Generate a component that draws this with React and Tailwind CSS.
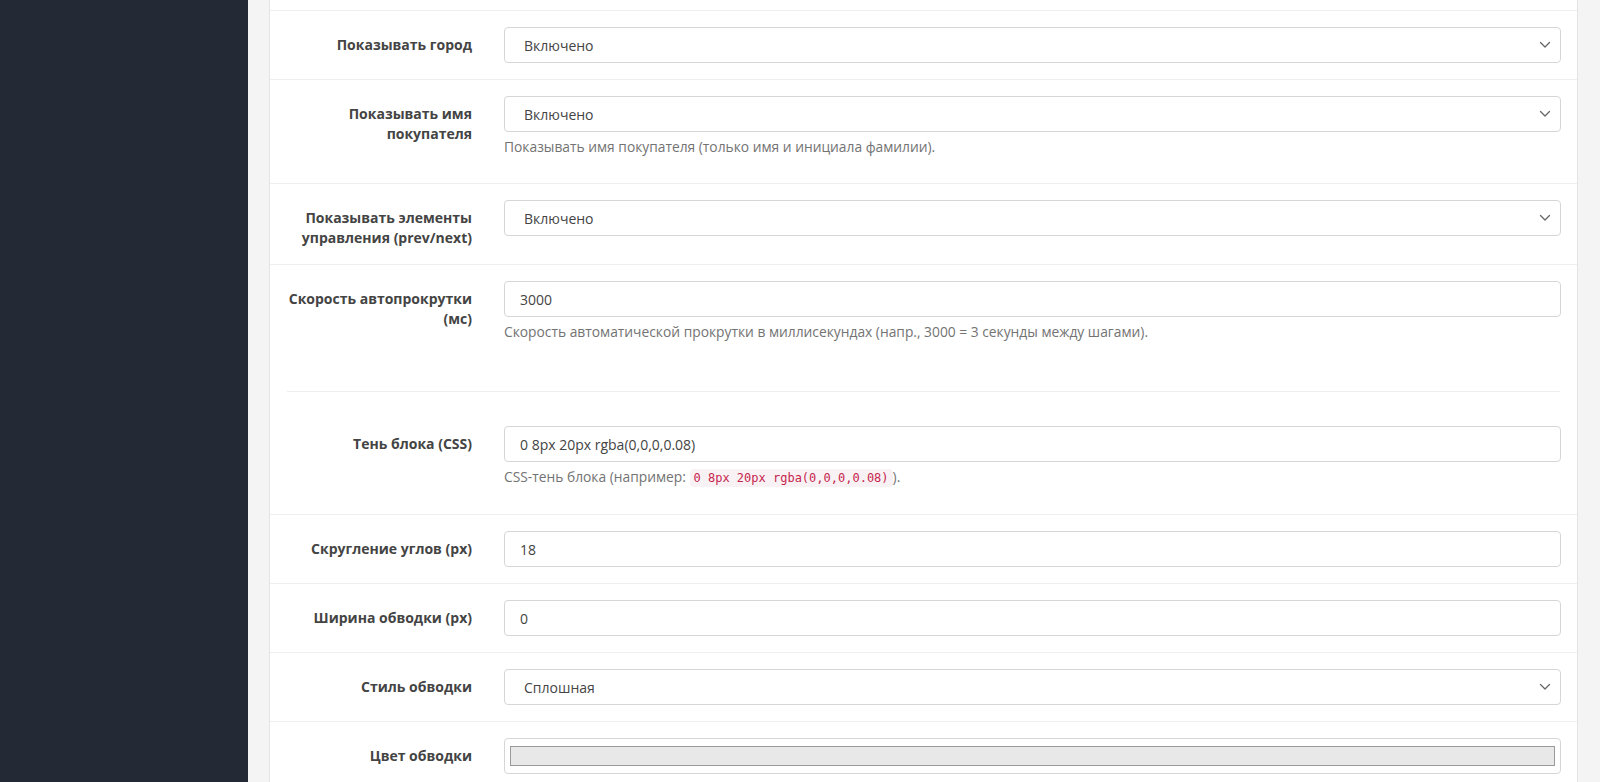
import React from 'react';

const Chevron = () => (
  <svg className="absolute right-[9px] top-1/2 -translate-y-1/2" width="12" height="8" viewBox="0 0 12 8" fill="none">
    <path d="M1.5 1.5L6 6L10.5 1.5" stroke="#666" strokeWidth="1.3" strokeLinecap="round" strokeLinejoin="round" />
  </svg>
);

const Select = ({ value }) => (
  <div className="relative h-[36px] w-full rounded-[4px] border border-[#d6d6d6] bg-white pl-[19px] flex items-center text-[14px] text-[#444]">
    {value}
    <Chevron />
  </div>
);

const Input = ({ value }) => (
  <div className="h-[36px] w-full rounded-[4px] border border-[#d6d6d6] bg-white pl-[15px] flex items-center text-[14px] text-[#444]">
    {value}
  </div>
);

const Help = ({ children }) => (
  <p className="mt-[5px] mb-[10px] text-[13.8px] leading-[20px] text-[#737373]">{children}</p>
);

const Row = ({ label, children, border = true }) => (
  <div className={`flex gap-[32px] px-4 py-4 ${border ? 'border-b border-[#efefef]' : ''}`}>
    <label className="w-[186px] shrink-0 pt-[8px] text-right text-[14px] font-bold leading-[20px] text-[#444]">
      {label}
    </label>
    <div className="flex-1 min-w-0">{children}</div>
  </div>
);

export default function App() {
  return (
    <div className="flex h-[782px] overflow-hidden bg-[#f4f4f4] font-['Open_Sans',sans-serif]">
      <aside className="w-[248px] shrink-0 bg-[#232a36]" />
      <main className="flex-1 pl-[21px] pr-[22px]">
        <div className="border-x border-[#e4e4e4] bg-white">
          <div className="h-[11px] border-b border-[#efefef]" />

          <Row label="Показывать город">
            <Select value="Включено" />
          </Row>

          <Row label="Показывать имя покупателя">
            <Select value="Включено" />
            <Help>Показывать имя покупателя (только имя и инициала фамилии).</Help>
          </Row>

          <Row label="Показывать элементы управления (prev/next)">
            <Select value="Включено" />
          </Row>

          <Row label="Скорость автопрокрутки (мс)" border={false}>
            <Input value="3000" />
            <Help>Скорость автоматической прокрутки в миллисекундах (напр., 3000 = 3 секунды между шагами).</Help>
          </Row>

          <hr className="mx-[17px] mt-[23px] mb-[18px] border-t border-[#eeeeee]" />

          <Row label="Тень блока (CSS)">
            <Input value="0 8px 20px rgba(0,0,0,0.08)" />
            <Help>
              CSS-тень блока (например:{' '}
              <code className="rounded-[4px] bg-[#f9f2f4] px-[4px] py-[2px] font-['DejaVu_Sans_Mono',monospace] text-[12px] text-[#c7254e]">
                0 8px 20px rgba(0,0,0,0.08)
              </code>
              ).
            </Help>
          </Row>

          <Row label="Скругление углов (px)">
            <Input value="18" />
          </Row>

          <Row label="Ширина обводки (px)">
            <Input value="0" />
          </Row>

          <Row label="Стиль обводки">
            <Select value="Сплошная" />
          </Row>

          <Row label="Цвет обводки">
            <div className="h-[36px] w-full rounded-[4px] border border-[#d6d6d6] bg-white px-[5px] py-[7px]">
              <div className="h-full w-full border border-[#9a9a9a] bg-[#e8e8e8]" />
            </div>
          </Row>
        </div>
      </main>
    </div>
  );
}
